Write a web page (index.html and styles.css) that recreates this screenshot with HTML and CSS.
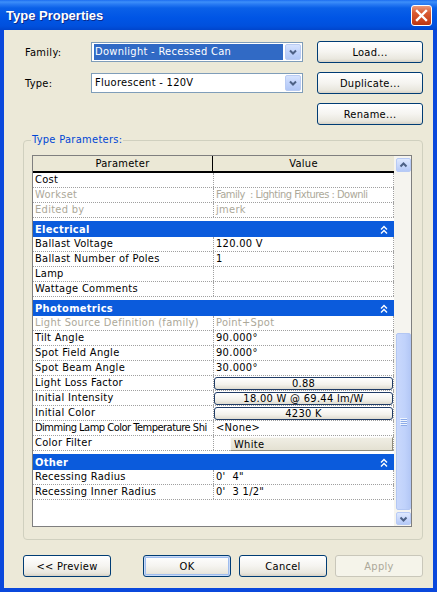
FILE: index.html
```html
<!DOCTYPE html>
<html lang="en">

<head>
    <title>Type Properties</title>
    <link rel="stylesheet" href="styles.css">
</head>

<body>
    <div class="window">
        <div class="titlebar">
            <span class="title">Type Properties</span>
            <button class="close" type="button">
                <svg width="13" height="13" viewBox="0 0 13 13">
                    <path d="M2 2 L11 11 M11 2 L2 11" stroke="#fff" stroke-width="2.4" stroke-linecap="square" />
                </svg>
            </button>
        </div>
        <div class="frame">
            <div class="top-form">
                <label class="field-label">Family:</label>
                <div class="combo">
                    <span class="combo-text selected">Downlight - Recessed Can</span>
                    <span class="combo-btn">
                        <svg width="14" height="14" viewBox="0 0 14 14">
                            <polyline points="4,5.5 7,8.5 10,5.5" fill="none" stroke="#4d6185" stroke-width="2" />
                        </svg>
                    </span>
                </div>
                <button class="btn" type="button">Load...</button>

                <label class="field-label">Type:</label>
                <div class="combo">
                    <span class="combo-text">Fluorescent - 120V</span>
                    <span class="combo-btn">
                        <svg width="14" height="14" viewBox="0 0 14 14">
                            <polyline points="4,5.5 7,8.5 10,5.5" fill="none" stroke="#4d6185" stroke-width="2" />
                        </svg>
                    </span>
                </div>
                <button class="btn" type="button">Duplicate...</button>

                <button class="btn rename" type="button">Rename...</button>
            </div>

            <fieldset class="group">
                <legend>Type Parameters:</legend>
                <div class="grid-box">
                    <div class="grid">
                        <div class="grid-head">
                            <div class="head-cell">Parameter</div>
                            <div class="head-cell value-head">Value</div>
                        </div>

                        <div class="row">
                            <div class="name">Cost</div>
                            <div class="value"></div>
                        </div>
                        <div class="row dim">
                            <div class="name">Workset</div>
                            <div class="value tight">Family&nbsp; : Lighting Fixtures : Downli</div>
                        </div>
                        <div class="row dim">
                            <div class="name">Edited by</div>
                            <div class="value">jmerk</div>
                        </div>

                        <div class="category">
                            <span>Electrical</span>
                            <svg width="8" height="9" viewBox="0 0 8 9">
                                <polyline points="1,4.5 4,1.5 7,4.5" fill="none" stroke="#fff" stroke-width="1.4" />
                                <polyline points="1,8.5 4,5.5 7,8.5" fill="none" stroke="#fff" stroke-width="1.4" />
                            </svg>
                        </div>
                        <div class="row">
                            <div class="name">Ballast Voltage</div>
                            <div class="value">120.00 V</div>
                        </div>
                        <div class="row">
                            <div class="name">Ballast Number of Poles</div>
                            <div class="value">1</div>
                        </div>
                        <div class="row">
                            <div class="name">Lamp</div>
                            <div class="value"></div>
                        </div>
                        <div class="row">
                            <div class="name">Wattage Comments</div>
                            <div class="value"></div>
                        </div>

                        <div class="category">
                            <span>Photometrics</span>
                            <svg width="8" height="9" viewBox="0 0 8 9">
                                <polyline points="1,4.5 4,1.5 7,4.5" fill="none" stroke="#fff" stroke-width="1.4" />
                                <polyline points="1,8.5 4,5.5 7,8.5" fill="none" stroke="#fff" stroke-width="1.4" />
                            </svg>
                        </div>
                        <div class="row dim">
                            <div class="name">Light Source Definition (family)</div>
                            <div class="value">Point+Spot</div>
                        </div>
                        <div class="row">
                            <div class="name">Tilt Angle</div>
                            <div class="value">90.000°</div>
                        </div>
                        <div class="row">
                            <div class="name">Spot Field Angle</div>
                            <div class="value">90.000°</div>
                        </div>
                        <div class="row">
                            <div class="name">Spot Beam Angle</div>
                            <div class="value">30.000°</div>
                        </div>
                        <div class="row">
                            <div class="name">Light Loss Factor</div>
                            <div class="value no-pad"><div class="prop-btn">0.88</div></div>
                        </div>
                        <div class="row">
                            <div class="name">Initial Intensity</div>
                            <div class="value no-pad"><div class="prop-btn">18.00 W @ 69.44 lm/W</div></div>
                        </div>
                        <div class="row">
                            <div class="name">Initial Color</div>
                            <div class="value no-pad"><div class="prop-btn">4230 K</div></div>
                        </div>
                        <div class="row">
                            <div class="name tight">Dimming Lamp Color Temperature Shi</div>
                            <div class="value">&lt;None&gt;</div>
                        </div>
                        <div class="row">
                            <div class="name">Color Filter</div>
                            <div class="value no-pad color-cell">
                                <span class="swatch"></span>
                                <span class="color-btn">White</span>
                            </div>
                        </div>

                        <div class="category">
                            <span>Other</span>
                            <svg width="8" height="9" viewBox="0 0 8 9">
                                <polyline points="1,4.5 4,1.5 7,4.5" fill="none" stroke="#fff" stroke-width="1.4" />
                                <polyline points="1,8.5 4,5.5 7,8.5" fill="none" stroke="#fff" stroke-width="1.4" />
                            </svg>
                        </div>
                        <div class="row">
                            <div class="name">Recessing Radius</div>
                            <div class="value">0'&nbsp; 4"</div>
                        </div>
                        <div class="row">
                            <div class="name">Recessing Inner Radius</div>
                            <div class="value">0'&nbsp; 3 1/2"</div>
                        </div>
                    </div>

                    <div class="scrollbar">
                        <div class="scroll-btn">
                            <svg width="13" height="12" viewBox="0 0 13 12">
                                <polyline points="3.5,7.5 6.5,4.5 9.5,7.5" fill="none" stroke="#4d6185" stroke-width="2" />
                            </svg>
                        </div>
                        <div class="thumb">
                            <svg width="7" height="8" viewBox="0 0 7 8">
                                <path d="M0 0.5 H7 M0 2.5 H7 M0 4.5 H7 M0 6.5 H7" stroke="#eef4fe" stroke-width="1" />
                                <path d="M1 1.5 H7 M1 3.5 H7 M1 5.5 H7 M1 7.5 H7" stroke="#8cabe8" stroke-width="1" />
                            </svg>
                        </div>
                        <div class="scroll-btn down">
                            <svg width="13" height="12" viewBox="0 0 13 12">
                                <polyline points="3.5,4.5 6.5,7.5 9.5,4.5" fill="none" stroke="#4d6185" stroke-width="2" />
                            </svg>
                        </div>
                    </div>
                </div>
            </fieldset>

            <div class="footer">
                <button class="btn small" type="button">&lt;&lt; Preview</button>
                <div class="btn-group">
                    <button class="btn small default" type="button">OK</button>
                    <button class="btn small" type="button">Cancel</button>
                    <button class="btn small disabled" type="button">Apply</button>
                </div>
            </div>
        </div>
    </div>
</body>

</html>
```

FILE: styles.css
```css
* {
    margin: 0;
    padding: 0;
    box-sizing: border-box;
}

body {
    width: 437px;
    height: 592px;
    background: #ece9d8;
    color: #000;
    font-family: "DejaVu Sans Condensed", "Liberation Sans", sans-serif;
    font-size: 11px;
    letter-spacing: 0.3px;
    overflow: hidden;
}

.window {
    width: 437px;
    height: 592px;
    display: flex;
    flex-direction: column;
}

.titlebar {
    height: 30px;
    display: flex;
    align-items: center;
    justify-content: space-between;
    padding: 0 5px 0 6px;
    background: linear-gradient(#1c6df0 0, #3d8ff9 2px, #2a7cf4 4px, #0a60e8 8px, #0055e5 18px, #0050dd 26px, #0045cc 30px);
}

.title {
    color: #fff;
    font-family: "Liberation Sans", sans-serif;
    font-weight: bold;
    font-size: 13px;
    letter-spacing: 0;
    text-shadow: 1px 1px #0b2a8a;
}

.close {
    width: 21px;
    height: 21px;
    display: flex;
    align-items: center;
    justify-content: center;
    border: 1px solid #fff;
    border-radius: 3px;
    background: linear-gradient(#eb9a7c, #da5c33 35%, #c9421c 80%, #b83512);
}

.frame {
    flex: 1;
    border: 4px solid #0a48dc;
    border-top: 0;
    padding: 11px 10px 11px 19px;
    background: #ece9d8;
}

.top-form {
    display: grid;
    grid-template-columns: 68px 226px 106px;
    grid-auto-rows: 22px;
    align-items: center;
    row-gap: 9px;
}

.field-label {
    padding-left: 2px;
}

.rename {
    grid-column: 3;
}

.combo {
    display: flex;
    width: 212px;
    height: 20px;
    padding: 1px;
    border: 1px solid #7f9db9;
    background: #fff;
}

.combo-text {
    flex: 1;
    line-height: 16px;
    padding-left: 2px;
    margin-right: 1px;
    white-space: nowrap;
}

.combo-text.selected {
    margin: 0 2px 0 1px;
    padding-left: 1px;
    background: #316ac5;
    color: #fff;
}

.combo-btn {
    width: 16px;
    height: 16px;
    display: flex;
    align-items: center;
    justify-content: center;
    border: 1px solid #b9cbf3;
    border-radius: 2px;
    background: linear-gradient(#d6e3fe, #c1d3fb 50%, #b1c7f6);
}

.btn {
    width: 106px;
    height: 22px;
    border: 1px solid #003c74;
    border-radius: 3px;
    background: linear-gradient(#ffffff, #f5f4f0 50%, #e9e7de 85%, #d7d2c6);
    font-family: inherit;
    font-size: 11px;
    letter-spacing: 0.3px;
    color: #000;
}

.group {
    margin-top: 8px;
    padding: 8px 10px 12px 8px;
    border: 1px solid #d0d0bf;
    border-radius: 4px;
}

.group legend {
    margin-left: -1px;
    padding: 0 1px;
    line-height: 14px;
    color: #0046d5;
}

.grid-box {
    display: flex;
    height: 372px;
    border: 1px solid #7f7f7f;
    background: #fff;
}

.grid {
    width: 361px;
}

.grid-head {
    display: flex;
    height: 17px;
    border-bottom: 2px solid #000;
    background: #ebe8d6;
}

.head-cell {
    width: 180px;
    line-height: 15px;
    text-align: center;
    border-right: 1px solid #000;
}

.head-cell.value-head {
    width: 181px;
    border-right: 0;
}

.row {
    display: flex;
    height: 15px;
    border-bottom: 1px dotted #a0a0a0;
}

.name {
    width: 180px;
    padding-left: 2px;
    line-height: 14px;
    white-space: nowrap;
    overflow: hidden;
}

.value {
    width: 181px;
    padding-left: 2px;
    line-height: 14px;
    white-space: nowrap;
    overflow: hidden;
    border-left: 1px dotted #a0a0a0;
    border-right: 1px dotted #a0a0a0;
}

.name.tight,
.value.tight {
    letter-spacing: -0.5px;
}

.value.no-pad {
    padding-left: 0;
    overflow: visible;
}

.dim {
    color: #aca899;
}

.prop-btn {
    height: 13px;
    margin-top: 1px;
    border: 1px solid #1f3c66;
    border-radius: 3px;
    background: linear-gradient(#ffffff, #f3f2ec 60%, #dedbd0);
    line-height: 11px;
    text-align: center;
}

.color-cell {
    display: flex;
}

.swatch {
    width: 16px;
    background: #fff;
}

.color-btn {
    flex: 1;
    height: 14px;
    margin-top: 1px;
    padding-left: 3px;
    line-height: 13px;
    border-top: 1px solid #fbfaf6;
    border-left: 1px solid #fbfaf6;
    border-right: 1px solid #8e8b7c;
    border-bottom: 1px solid #8e8b7c;
    background: linear-gradient(#f0eee4, #e4e1d2);
}

.category {
    display: flex;
    align-items: center;
    justify-content: space-between;
    height: 16px;
    margin-top: 3px;
    padding: 0 6px 0 2px;
    background: #0b5bdc;
    color: #fff;
    font-weight: bold;
}

.scrollbar {
    width: 17px;
    padding: 2px 0 1px 2px;
    background: #f5f4ef;
}

.scroll-btn {
    width: 15px;
    height: 14px;
    display: flex;
    align-items: center;
    justify-content: center;
    border: 1px solid #b7caf5;
    border-radius: 2px;
    background: linear-gradient(#dfe9fe, #c6d6fb 60%, #b5c9f6);
}

.scroll-btn.down {
    height: 13px;
    margin-top: 2px;
}

.thumb {
    width: 15px;
    height: 177px;
    margin-top: 161px;
    display: flex;
    align-items: center;
    justify-content: center;
    border: 1px solid #b3c7f3;
    border-radius: 2px;
    background: linear-gradient(to right, #c9d8fc, #c0d2fb 60%, #b4c8f6);
}

.footer {
    display: flex;
    justify-content: space-between;
    margin-top: 15px;
}

.btn-group {
    display: flex;
    gap: 8px;
}

.btn.small {
    width: 88px;
}

.btn.default {
    box-shadow: inset 0 0 0 1px #c9daf6, inset 0 0 0 2px #9fbdee;
}

.btn.disabled {
    border-color: #c9c7ba;
    background: #f5f4ea;
    color: #aca899;
}
```
